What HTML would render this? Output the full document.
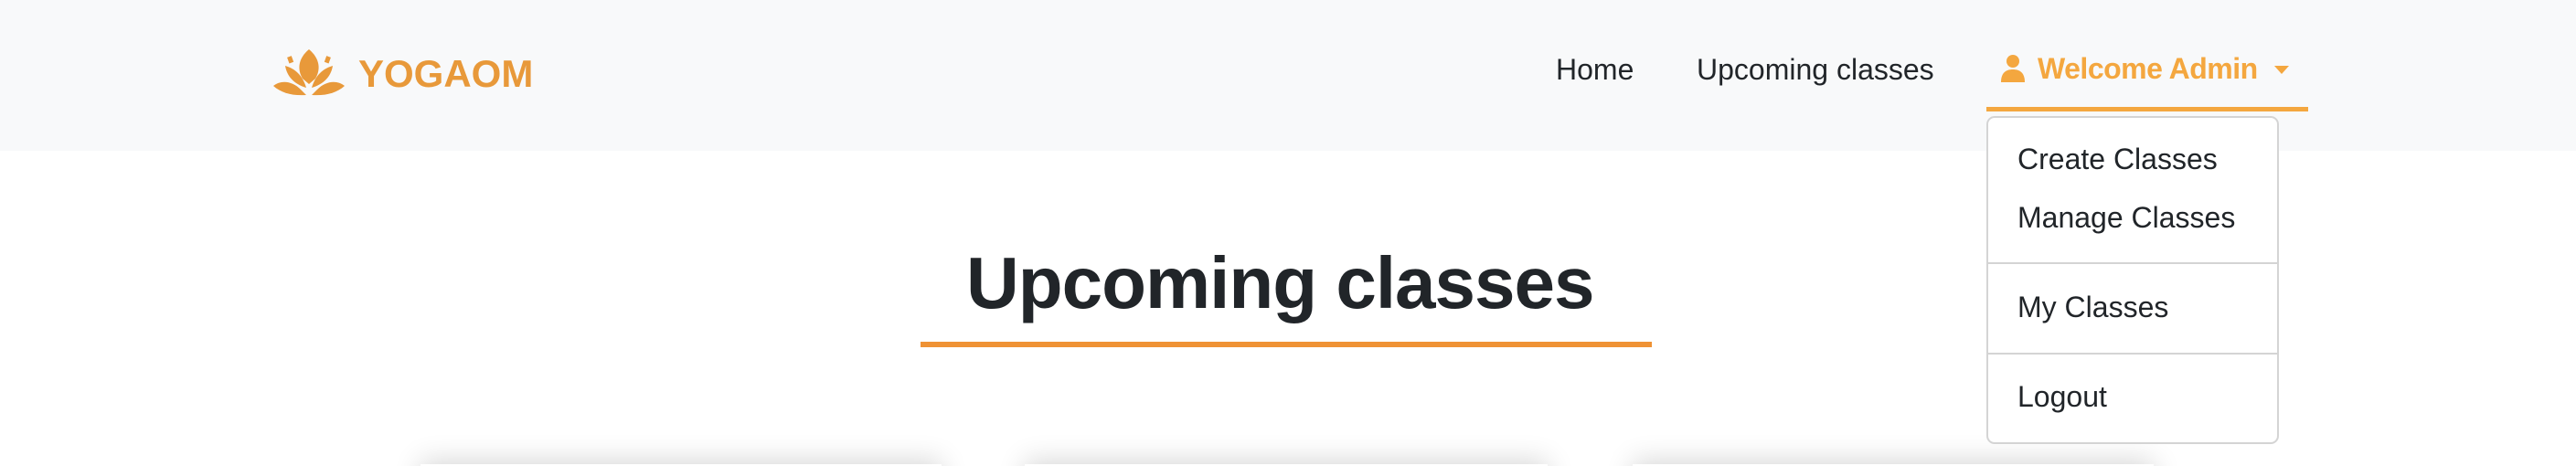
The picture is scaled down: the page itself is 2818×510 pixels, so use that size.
<!DOCTYPE html>
<html><head><meta charset="utf-8"><style>
html,body{margin:0;padding:0;width:2818px;height:510px;overflow:hidden;background:#fff;font-family:"Liberation Sans",sans-serif;position:relative}
.nav{position:absolute;left:0;top:0;width:2818px;height:165px;background:#f8f9fa}
.a{position:absolute;white-space:nowrap}
.clip{position:absolute;left:0;top:0;width:2818px;height:510px;overflow:hidden}
.card{position:absolute;top:508px;height:40px;background:#fff;box-shadow:0 -4px 30px rgba(0,0,0,.16)}
.dd{position:absolute;left:2173px;top:127px;width:316px;height:355px;border:2px solid #d4d4d4;border-radius:9px;background:#fff}
.it{position:absolute;left:32px;font-size:32px;color:#212529}
.hr{position:absolute;left:0;width:316px;height:2px;background:#d4d4d4}
</style></head><body>
<div class="nav"></div>
<svg class="a" style="left:298px;top:52px" width="80" height="54" viewBox="0 0 80 54">
<g fill="#e8993a">
<path d="M40 2 C28 12 27 24 33 34 L40 40 L47 34 C53 24 52 12 40 2Z"/>
<path d="M14 20 C16 32 24 40 37 44 C34 34 28 24 14 20Z"/>
<path d="M66 20 C64 32 56 40 43 44 C46 34 52 24 66 20Z"/>
<path d="M1 42 C10 35 22 37 31 46 C33 48 35 50 37 52 C22 53 10 50 1 42Z"/>
<path d="M79 42 C70 35 58 37 49 46 C47 48 45 50 43 52 C58 53 70 50 79 42Z"/>
<rect x="17" y="10" width="5" height="7" transform="rotate(-20 19 13)"/>
<rect x="58" y="10" width="5" height="7" transform="rotate(20 61 13)"/>
</g></svg>
<div class="a" style="left:392px;top:57px;font-size:42px;font-weight:600;color:#e8993a;letter-spacing:0px">YOGAOM</div>
<div class="a" style="left:1702px;top:58px;font-size:32px;color:#212529">Home</div>
<div class="a" style="left:1856px;top:58px;font-size:32px;color:#212529">Upcoming classes</div>
<svg class="a" style="left:2188px;top:59px" width="28" height="32" viewBox="0 0 28 32"><circle cx="14" cy="8" r="7" fill="#f4a73f"/><path d="M1 31 C1 21 6 17 14 17 C22 17 27 21 27 31Z" fill="#f4a73f"/></svg>
<div class="a" style="left:2229px;top:57px;font-size:32px;font-weight:bold;color:#f4a73f;letter-spacing:-0.5px">Welcome Admin</div>
<svg class="a" style="left:2488px;top:72px" width="16" height="10"><path d="M0 0H16L8 9Z" fill="#f4a73f"/></svg>
<div class="a" style="left:2173px;top:117px;width:352px;height:5px;background:#f4a73f"></div>
<div class="a" style="left:1057px;top:264px;font-size:80px;font-weight:bold;color:#212529;letter-spacing:-1px">Upcoming classes</div>
<div class="a" style="left:1007px;top:374px;width:800px;height:6px;background:#ef9234"></div>
<div class="clip">
<div class="card" style="left:460px;width:570px"></div>
<div class="card" style="left:1121px;width:572px"></div>
<div class="card" style="left:1786px;width:570px"></div>
</div>
<div class="dd">
<div class="it" style="top:27px">Create Classes</div>
<div class="it" style="top:91px">Manage Classes</div>
<div class="hr" style="top:158px"></div>
<div class="it" style="top:189px">My Classes</div>
<div class="hr" style="top:257px"></div>
<div class="it" style="top:287px">Logout</div>
</div>
</body></html>
